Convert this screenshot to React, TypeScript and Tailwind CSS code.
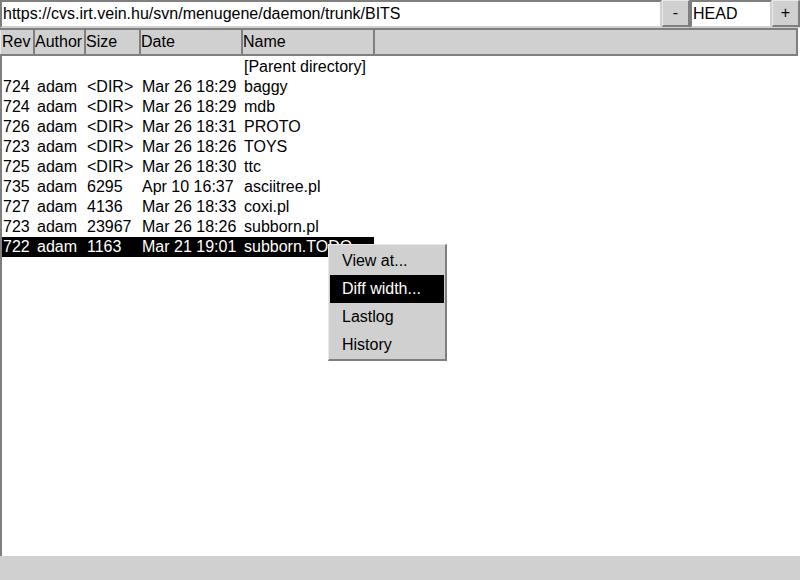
import React from 'react';

const rows = [
  { rev: '724', author: 'adam', size: '<DIR>', date: 'Mar 26 18:29', name: 'baggy' },
  { rev: '724', author: 'adam', size: '<DIR>', date: 'Mar 26 18:29', name: 'mdb' },
  { rev: '726', author: 'adam', size: '<DIR>', date: 'Mar 26 18:31', name: 'PROTO' },
  { rev: '723', author: 'adam', size: '<DIR>', date: 'Mar 26 18:26', name: 'TOYS' },
  { rev: '725', author: 'adam', size: '<DIR>', date: 'Mar 26 18:30', name: 'ttc' },
  { rev: '735', author: 'adam', size: '6295', date: 'Apr 10 16:37', name: 'asciitree.pl' },
  { rev: '727', author: 'adam', size: '4136', date: 'Mar 26 18:33', name: 'coxi.pl' },
  { rev: '723', author: 'adam', size: '23967', date: 'Mar 26 18:26', name: 'subborn.pl' },
  { rev: '722', author: 'adam', size: '1163', date: 'Mar 21 19:01', name: 'subborn.TODO', selected: true },
];

const headers = [
  { label: 'Rev', w: 'w-[35px]' },
  { label: 'Author', w: 'w-[51px]' },
  { label: 'Size', w: 'w-[55px]' },
  { label: 'Date', w: 'w-[102px]' },
  { label: 'Name', w: 'w-[132px]' },
];

const menu = ['View at...', 'Diff width...', 'Lastlog', 'History'];

export default function App() {
  return (
    <div
      className="w-[800px] h-[580px] bg-white flex flex-col relative overflow-hidden text-[16px] text-black"
      style={{ fontFamily: '"Liberation Sans", Arial, sans-serif' }}
    >
      {/* url bar */}
      <div className="flex h-[28px] bg-[#d0d0d0]">
        <div className="flex-1 bg-white border-t-2 border-l-2 border-[#7f7f7f] border-b-2 border-b-[#d0d0d0] border-r-2 border-r-[#d0d0d0] flex items-center pl-[1px] leading-none">
          https://cvs.irt.vein.hu/svn/menugene/daemon/trunk/BITS
        </div>
        <div className="w-[28px] h-[27px] border-r-2 border-b-2 border-[#7f7f7f] border-t border-t-[#e8e8e8] border-l border-l-[#e8e8e8] flex items-center justify-center bg-[#d0d0d0]">
          -
        </div>
        <div className="w-[82px] bg-white border-t-2 border-l-2 border-[#7f7f7f] border-b-2 border-b-[#d0d0d0] border-r-2 border-r-[#d0d0d0] flex items-center pl-[1px] leading-none">
          HEAD
        </div>
        <div className="w-[28px] h-[27px] border-r-2 border-b-2 border-[#7f7f7f] border-t border-t-[#e8e8e8] border-l border-l-[#e8e8e8] flex items-center justify-center bg-[#d0d0d0]">
          +
        </div>
      </div>

      {/* column header */}
      <div className="flex h-[28px] bg-[#d0d0d0] border-t-2 border-b-2 border-[#7f7f7f] mr-[2px] border-r-2">
        {headers.map((h, i) => (
          <div
            key={h.label}
            className={`${h.w} border-r-2 border-[#7f7f7f] flex items-center overflow-hidden whitespace-nowrap ${i === 0 ? 'border-l border-l-[#e8e8e8] pl-[1px]' : ''}`}
          >
            {h.label}
          </div>
        ))}
        <div className="flex-1" />
      </div>

      {/* listing */}
      <div className="flex-1 border-l-2 border-[#7f7f7f] pt-[1px]">
        <div className="flex h-[20px] items-center">
          <div className="w-[242px]" />
          <div>[Parent directory]</div>
        </div>
        {rows.map((r, i) => (
          <div
            key={i}
            className={`flex h-[20px] items-center w-[372px] whitespace-nowrap ${r.selected ? 'bg-black text-white' : ''}`}
          >
            <div className="w-[35px] pl-[1px]">{r.rev}</div>
            <div className="w-[50px]">{r.author}</div>
            <div className="w-[55px]">{r.size}</div>
            <div className="w-[102px]">{r.date}</div>
            <div>{r.name}</div>
          </div>
        ))}
      </div>

      {/* status bar */}
      <div className="h-[24px] bg-[#d0d0d0]" />

      {/* popup menu */}
      <div className="absolute left-[328px] top-[244px] w-[119px] bg-[#d0d0d0] border-t border-l border-[#e8e8e8] border-r-2 border-b-2 border-r-[#7f7f7f] border-b-[#7f7f7f] pt-[2px]">
        {menu.map((m, i) => (
          <div
            key={m}
            className={`h-[28px] flex items-center px-[12px] mx-[1px] ${i === 1 ? 'bg-black text-white' : ''}`}
          >
            {m}
          </div>
        ))}
      </div>
    </div>
  );
}
